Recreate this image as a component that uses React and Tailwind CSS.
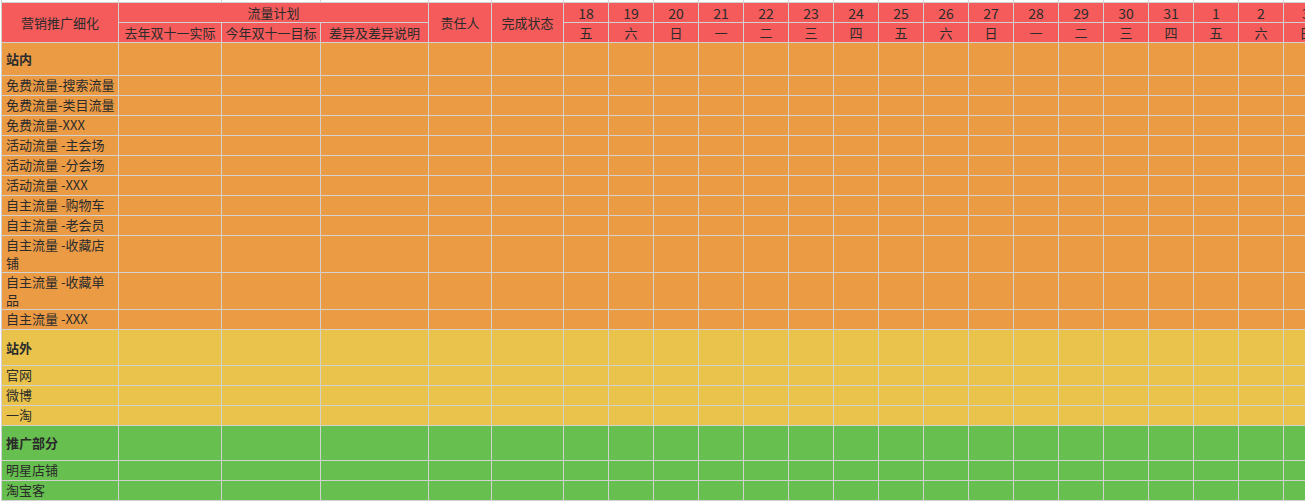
import React from 'react';

const days = [
  ['18', '五'], ['19', '六'], ['20', '日'], ['21', '一'], ['22', '二'], ['23', '三'],
  ['24', '四'], ['25', '五'], ['26', '六'], ['27', '日'], ['28', '一'], ['29', '二'],
  ['30', '三'], ['31', '四'], ['1', '五'], ['2', '六'], ['3', '日'], ['4', '一'], ['5', '二'],
];

const ORANGE = 'bg-[#ec9b45]';
const YELLOW = 'bg-[#e9c34c]';
const GREEN = 'bg-[#67bf4f]';

// 每行: 标签, 颜色, 是否分组标题
const rows = [
  { label: ['站内'], bg: ORANGE, head: true },
  { label: ['免费流量-搜索流量'], bg: ORANGE },
  { label: ['免费流量-类目流量'], bg: ORANGE },
  { label: ['免费流量-XXX'], bg: ORANGE },
  { label: ['活动流量 -主会场'], bg: ORANGE },
  { label: ['活动流量 -分会场'], bg: ORANGE },
  { label: ['活动流量 -XXX'], bg: ORANGE },
  { label: ['自主流量 -购物车'], bg: ORANGE },
  { label: ['自主流量 -老会员'], bg: ORANGE },
  { label: ['自主流量 -收藏店', '铺'], bg: ORANGE },
  { label: ['自主流量 -收藏单', '品'], bg: ORANGE },
  { label: ['自主流量 -XXX'], bg: ORANGE },
  { label: ['站外'], bg: YELLOW, head: true },
  { label: ['官网'], bg: YELLOW },
  { label: ['微博'], bg: YELLOW },
  { label: ['一淘'], bg: YELLOW },
  { label: ['推广部分'], bg: GREEN, head: true },
  { label: ['明星店铺'], bg: GREEN },
  { label: ['淘宝客'], bg: GREEN },
];

const RED = 'bg-[#f55b5b]';
const TOTAL_COLS = 6 + days.length;

function HeadCell({ children, className = '' }) {
  return (
    <div className={`${RED} flex items-center justify-center whitespace-nowrap leading-[18px] ${className}`}>
      {children}
    </div>
  );
}

export default function App() {
  return (
    <div
      className="w-[1305px] h-[501px] overflow-hidden bg-white text-[13px] text-[#2b2b2b]"
      style={{ fontFamily: '"Noto Sans CJK SC", "Noto Sans", sans-serif' }}
    >
      <div className="ml-px pl-px w-max bg-[#d2d2d2]">
        <div className="grid gap-px grid-cols-[116px_102px_98px_107px_62px_71px_repeat(19,44px)] grid-rows-[2px_19px_19px_32px_repeat(8,19px)_36px_36px_19px_35px_19px_19px_19px_34px_19px_19px_19px]">
          {/* 上一行残留 */}
          {Array.from({ length: TOTAL_COLS }).map((_, i) => (
            <div key={`top-${i}`} className="bg-white" />
          ))}

          {/* 表头第一行 */}
          <HeadCell className="row-span-2">营销推广细化</HeadCell>
          <HeadCell className="col-span-3">流量计划</HeadCell>
          <HeadCell className="row-span-2">责任人</HeadCell>
          <HeadCell className="row-span-2">完成状态</HeadCell>
          {days.map(([d]) => (
            <HeadCell key={`d-${d}`} className="text-[14px]">{d}</HeadCell>
          ))}

          {/* 表头第二行 */}
          <HeadCell>去年双十一实际</HeadCell>
          <HeadCell>今年双十一目标</HeadCell>
          <HeadCell>差异及差异说明</HeadCell>
          {days.map(([d, w]) => (
            <HeadCell key={`w-${d}`}>{w}</HeadCell>
          ))}

          {/* 数据行 */}
          {rows.map((r, ri) => (
            <React.Fragment key={ri}>
              <div
                className={`${r.bg} pl-[4px] whitespace-nowrap leading-[18px] flex flex-col ${
                  r.head ? 'justify-center font-bold' : 'justify-start'
                }`}
              >
                {r.label.map((l, li) => (
                  <span key={li}>{l}</span>
                ))}
              </div>
              {Array.from({ length: TOTAL_COLS - 1 }).map((_, ci) => (
                <div key={ci} className={r.bg} />
              ))}
            </React.Fragment>
          ))}
        </div>
      </div>
    </div>
  );
}
